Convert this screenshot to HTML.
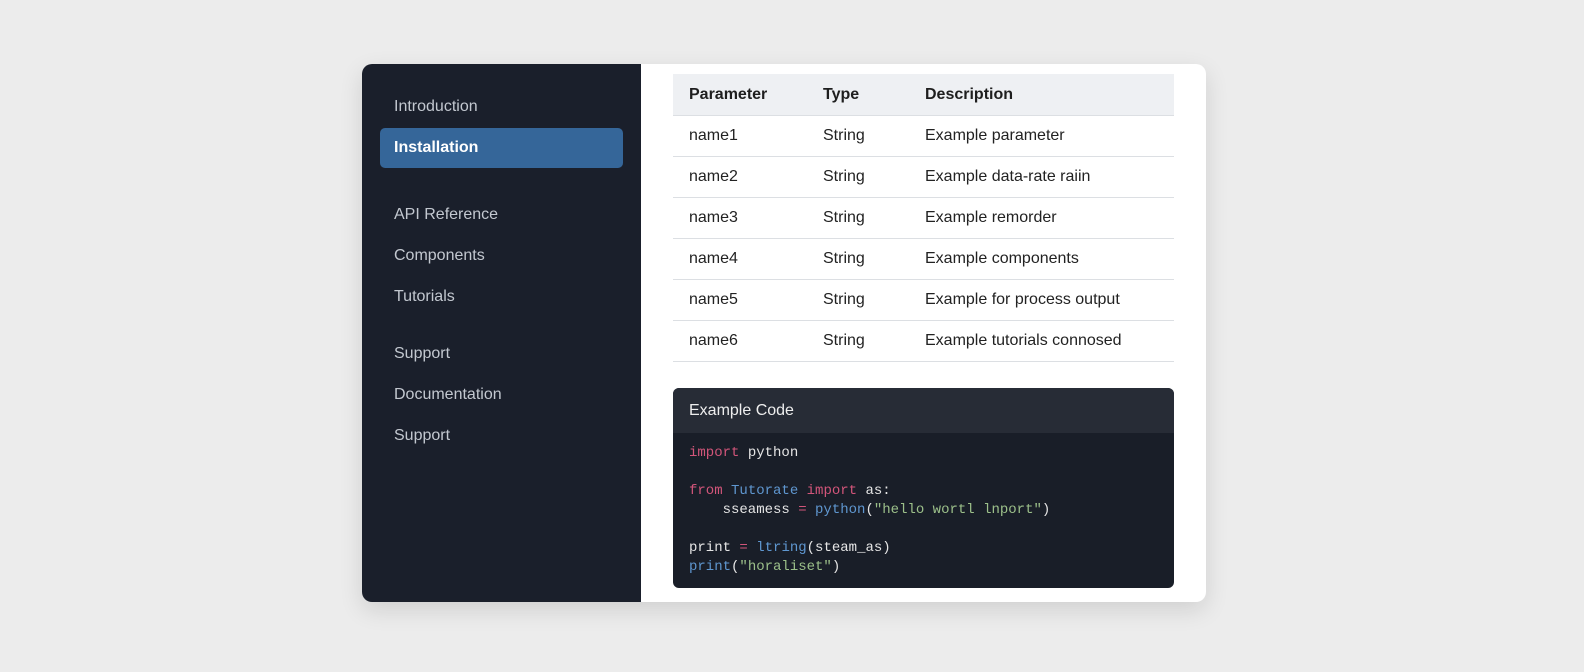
<!DOCTYPE html>
<html><head><style>
body{margin:0;width:1584px;height:672px;background:#ececec;font-family:"Liberation Sans",sans-serif;position:relative;overflow:hidden}
.card{position:absolute;left:362px;top:64px;width:844px;height:538px;background:#fff;border-radius:10px;overflow:hidden;box-shadow:0 8px 24px rgba(0,0,0,.12)}
.side{position:absolute;left:0;top:0;width:279px;height:538px;background:#1a1f2b}
.nav{position:absolute;left:32px;color:#c3c8d0;font-size:16px}
.act{position:absolute;left:18px;top:64px;width:243px;height:40px;background:#356699;border-radius:5px}
table{position:absolute;left:311px;top:10px;width:501px;border-collapse:collapse;font-size:16px;color:#222}
th{background:#eef0f3;text-align:left;font-weight:bold;height:41px;padding:0 0 0 16px;color:#1e1e1e}
td{height:40px;padding:0 0 0 16px;border-bottom:1px solid #dcdfe3}
th{border-bottom:1px solid #dcdfe3}
.code{position:absolute;left:311px;top:324px;width:501px;height:200px;background:#191e28;border-radius:6px;overflow:hidden}
.ch{height:45px;background:#272c36;color:#eee;font-size:16px;line-height:45px;padding-left:16px}
pre{margin:0;padding:11px 16px;font-family:"Liberation Mono",monospace;font-size:14px;line-height:19px;color:#e6e6e6}
.k{color:#d2557a}.b{color:#5f97d0}.s{color:#9cc08a}
</style></head><body>
<div class="card">
<div class="side">
<div class="act"></div>
<div class="nav" style="top:34px">Introduction</div>
<div class="nav" style="top:75px;color:#fff;font-weight:bold">Installation</div>
<div class="nav" style="top:142px">API Reference</div>
<div class="nav" style="top:183px">Components</div>
<div class="nav" style="top:224px">Tutorials</div>
<div class="nav" style="top:281px">Support</div>
<div class="nav" style="top:322px">Documentation</div>
<div class="nav" style="top:363px">Support</div>
</div>
<table>
<tr><th style="width:118px">Parameter</th><th style="width:86px">Type</th><th>Description</th></tr>
<tr><td>name1</td><td>String</td><td>Example parameter</td></tr>
<tr><td>name2</td><td>String</td><td>Example data-rate raiin</td></tr>
<tr><td>name3</td><td>String</td><td>Example remorder</td></tr>
<tr><td>name4</td><td>String</td><td>Example components</td></tr>
<tr><td>name5</td><td>String</td><td>Example for process output</td></tr>
<tr><td>name6</td><td>String</td><td>Example tutorials connosed</td></tr>
</table>
<div class="code"><div class="ch">Example Code</div>
<pre><span class="k">import</span> python

<span class="k">from</span> <span class="b">Tutorate</span> <span class="k">import</span> as:
    sseamess <span class="k">=</span> <span class="b">python</span>(<span class="s">"hello wortl lnport"</span>)

print <span class="k">=</span> <span class="b">ltring</span>(steam_as)
<span class="b">print</span>(<span class="s">"horaliset"</span>)</pre></div>
</div>
</body></html>
